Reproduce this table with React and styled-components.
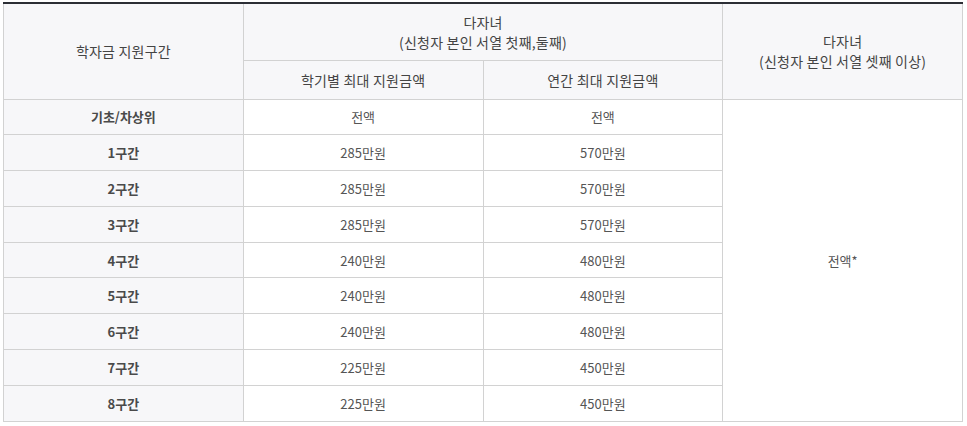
import React from "react";
import styled, { createGlobalStyle } from "styled-components";

const GlobalStyle = createGlobalStyle`
  body {
    margin: 0;
    background: #fff;
    font-family: "Noto Sans CJK KR", "Noto Sans", sans-serif;
  }
`;

const Wrap = styled.div`
  padding: 2px 0 0 3px;
`;

const Table = styled.table`
  width: 960px;
  border-collapse: collapse;
  table-layout: fixed;
  border-top: 2px solid #2c2e35;
  font-size: 13px;
  color: #555;
`;

const Th = styled.th`
  background: #f7f7f9;
  border: 1px solid #d2d2d2;
  border-top: none;
  font-size: 14px;
  font-weight: 400;
  color: #444;
  text-align: center;
  line-height: 20px;
  letter-spacing: 0.2px;
  padding: 0;
`;

const HeadRow = styled.tr`
  height: ${(props) => props.h}px;
`;

const Row = styled.tr`
  height: 35.8px;
`;

const Label = styled.td`
  background: #f7f7f9;
  border: 1px solid #d2d2d2;
  font-weight: 700;
  color: #4a4a4a;
  text-align: center;
  padding: 0;
`;

const Cell = styled.td`
  border: 1px solid #d2d2d2;
  text-align: center;
  padding: 0;
`;

const rows = [
  ["기초/차상위", "전액", "전액"],
  ["1구간", "285만원", "570만원"],
  ["2구간", "285만원", "570만원"],
  ["3구간", "285만원", "570만원"],
  ["4구간", "240만원", "480만원"],
  ["5구간", "240만원", "480만원"],
  ["6구간", "240만원", "480만원"],
  ["7구간", "225만원", "450만원"],
  ["8구간", "225만원", "450만원"],
];

const App = () => (
  <>
    <GlobalStyle />
    <Wrap>
      <Table>
        <thead>
          <HeadRow h={57}>
            <Th rowSpan={2}>학자금 지원구간</Th>
            <Th colSpan={2}>
              다자녀
              <br />
              (신청자 본인 서열 첫째,둘째)
            </Th>
            <Th rowSpan={2}>
              다자녀
              <br />
              (신청자 본인 서열 셋째 이상)
            </Th>
          </HeadRow>
          <HeadRow h={39}>
            <Th>학기별 최대 지원금액</Th>
            <Th>연간 최대 지원금액</Th>
          </HeadRow>
        </thead>
        <tbody>
          {rows.map((r, i) => (
            <Row key={r[0]}>
              <Label>{r[0]}</Label>
              <Cell>{r[1]}</Cell>
              <Cell>{r[2]}</Cell>
              {i === 0 && <Cell rowSpan={rows.length}>전액*</Cell>}
            </Row>
          ))}
        </tbody>
      </Table>
    </Wrap>
  </>
);

export default App;
